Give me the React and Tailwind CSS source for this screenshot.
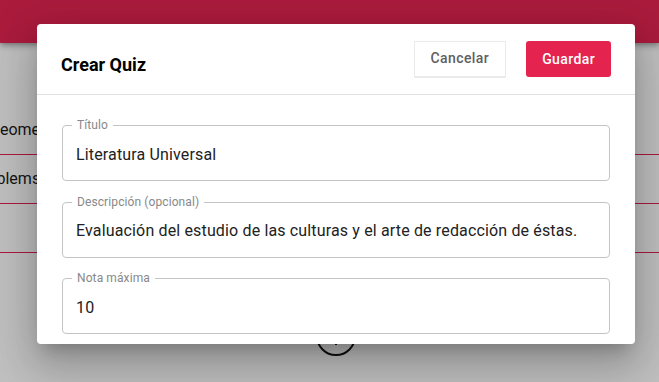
import React from "react";

function Field({ label, value }) {
  return (
    <div className="relative h-[56px] rounded-[4px] border border-[#c4c4c4] flex items-center px-[13px]">
      <span className="absolute -top-[8px] left-[9px] bg-white px-[5px] text-[12px] leading-[14px] text-[#888888] tracking-[0.1px]">
        {label}
      </span>
      <span className="text-[16px] leading-[23px] text-[#222222] tracking-[0.15px] pt-[2px]">{value}</span>
    </div>
  );
}

export default function App() {
  return (
    <div className="relative h-[382px] w-[659px] overflow-hidden bg-[#bfbfbf] font-['Roboto',sans-serif]">
      {/* background page */}
      <div className="h-[43px] bg-[#ab1b3c] shadow-[0_2px_4px_-1px_rgba(0,0,0,0.2),0_4px_5px_0_rgba(0,0,0,0.14),0_1px_10px_0_rgba(0,0,0,0.12)]" />
      <div className="mt-[63px] flex flex-col">
        <div className="h-[49px] border-b border-[#ac1a3c] flex items-center">
          <span className="-ml-[11px] text-[16px] text-[#141414]">Geometría</span>
        </div>
        <div className="h-[49px] border-b border-[#ac1a3c] flex items-center">
          <span className="-ml-[28px] text-[16px] text-[#141414]">Problems</span>
        </div>
        <div className="h-[49px] border-b border-[#ac1a3c]" />
      </div>
      <div className="mt-[59px] flex justify-center pl-[13px]">
        <svg width="48" height="48" viewBox="0 0 48 48" fill="none" stroke="#111111" strokeWidth="2">
          <circle cx="24" cy="24" r="19" />
          <path d="M24 15v18M15 24h18" />
        </svg>
      </div>

      {/* dialog */}
      <div className="absolute left-[37px] top-[24px] w-[598px] h-[320px] overflow-hidden rounded-[4px] bg-white flex flex-col shadow-[0_11px_15px_-7px_rgba(0,0,0,0.2),0_24px_38px_3px_rgba(0,0,0,0.14),0_9px_46px_8px_rgba(0,0,0,0.12)]">
        <div className="h-[71px] shrink-0 border-b border-[#e0e0e0] flex items-center justify-between pl-[24px] pr-[24px]">
          <h2 className="pt-[12px] text-[18px] leading-[24px] font-bold text-black">Crear Quiz</h2>
          <div className="flex items-center gap-[20px]">
            <button className="h-[37px] px-[16px] border border-[#ebebeb] border-b-2 bg-white text-[14px] font-medium tracking-[0.4px] text-[#606060]">
              Cancelar
            </button>
            <button className="h-[36px] px-[16px] rounded-[3px] bg-[#e4234f] text-[14px] font-medium tracking-[0.4px] text-white">
              Guardar
            </button>
          </div>
        </div>
        <div className="flex flex-col gap-[20.5px] px-[25px] pt-[30px]">
          <Field label="Título" value="Literatura Universal" />
          <Field label="Descripción (opcional)" value="Evaluación del estudio de las culturas y el arte de redacción de éstas." />
          <Field label="Nota máxima" value="10" />
        </div>
      </div>
    </div>
  );
}
